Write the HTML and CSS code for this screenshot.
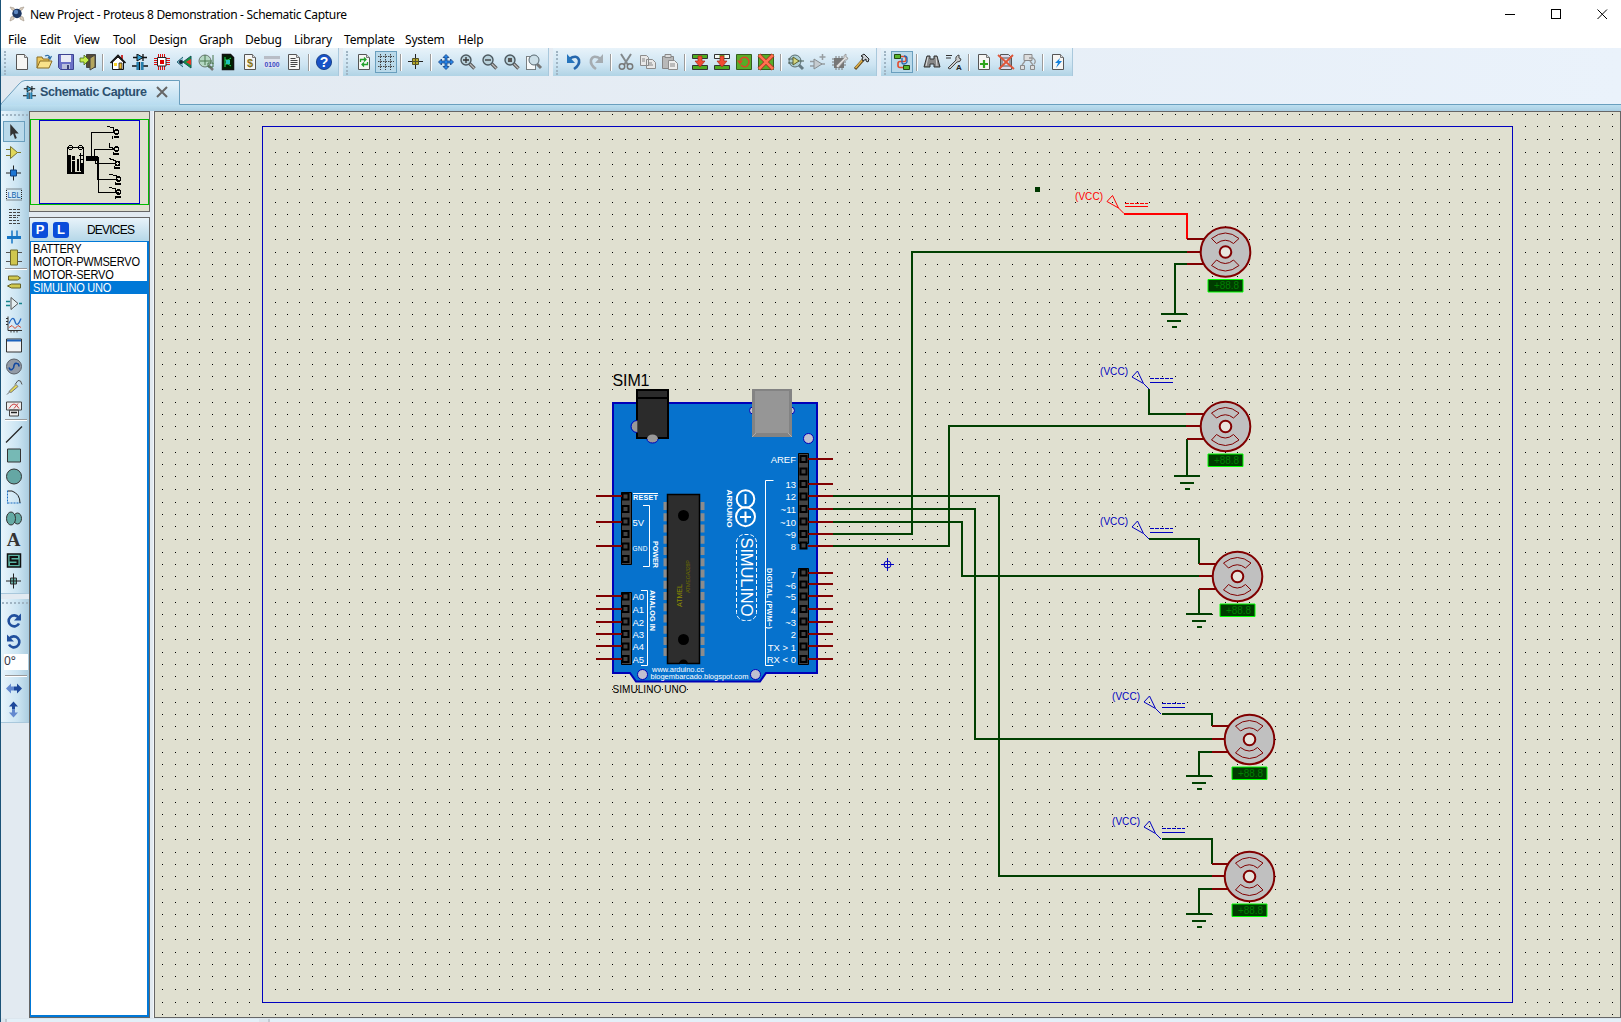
FILE: index.html
```html
<!DOCTYPE html>
<html lang="en">
<head>
<meta charset="utf-8">
<title>New Project - Proteus 8 Demonstration - Schematic Capture</title>
<link rel="stylesheet" href="styles.css">
</head>
<body>
<div class="window">
<header class="titlebar">
  <svg class="app-icon" viewBox="0 0 16 16"><path d="M1 1l4 1 1 3-3-1zM15 1l-4 1-1 3 3-1zM1 15l1-4 3-1 0 3zM15 15l-1-4-3-1 0 3z" fill="#d9cdbd" stroke="#a99d91" stroke-width=".7"/><circle cx="8" cy="7.500" r="4.700" fill="#1d3763"/><circle cx="7" cy="6" r="2.200" fill="#5d86bf"/></svg>
  <span class="title-text">New Project - Proteus 8 Demonstration - Schematic Capture</span>
  <div class="controls">
    <svg viewBox="0 0 11 11"><path d="M0 5.500h10" /></svg>
    <svg viewBox="0 0 11 11"><path d="M.5 .5h9v9h-9z"/></svg>
    <svg viewBox="0 0 11 11"><path d="M.5 .5l9.500 9.500M10 .5L.5 10" class="smooth"/></svg>
  </div>
</header>
<nav class="menu"><span>File</span><span>Edit</span><span>View</span><span>Tool</span><span>Design</span><span>Graph</span><span>Debug</span><span>Library</span><span>Template</span><span>System</span><span>Help</span></nav>

<svg class="defs" width="0" height="0">
  <defs>
    <symbol id="page" viewBox="0 0 16 16"><path d="M2.500 .5h8l3 3v12h-11z" fill="#f6f6f4" stroke="#555"/><path d="M10.500 .5v3h3" fill="#ddd" stroke="#777"/></symbol>
    <symbol id="lens" viewBox="0 0 16 16"><path d="M9 9l5.500 5.500" stroke="#555" stroke-width="3.400"/><path d="M9.500 9.500l5 5" stroke="#bbb" stroke-width="1.300"/><circle cx="6" cy="6" r="5" fill="#b9d2dc" stroke="#4d5960" stroke-width="1.400"/></symbol>
    <symbol id="diode" viewBox="0 0 16 16"><path d="M1 3.500h14M0 12h5M11 12h5M11 0v7M5.500 8v8M10.500 8v8M7.500 8v8" stroke="#111" stroke-width="1.300"/><path d="M5 0v7l6-3.500z" fill="#36a5d8" stroke="#111"/><path d="M4.500 8h2.500v8h-2.500zM9 8h2.500v8h-2.500z" fill="#247fae"/></symbol>
    <symbol id="transfer" viewBox="0 0 16 16"><path d="M.5 .5h15v4h-15zM.5 11.500h15v4h-15z" fill="#4fac21" stroke="#333"/><path d="M6 2h4v5h3l-5 6-5-6h3z" fill="#f14b32" stroke="#a72b18" stroke-width=".7"/></symbol>
  </defs>
</svg>

<section class="toolbars">
  <div class="group g1">
    <i class="grip"></i>
    <svg><use href="#page"/></svg>
    <svg viewBox="0 0 16 16"><path d="M1 14V3h5l1 2h6v3" fill="#eec85c" stroke="#8a6c22"/><path d="M1 14l3-7h12l-3 7z" fill="#fae28a" stroke="#8a6c22"/><path d="M9 2q4-2 5 2m-2-1l2 2 1.500-3" fill="none" stroke="#3170a8" stroke-width="1.200"/></svg>
    <svg viewBox="0 0 16 16"><path d="M.5 .5h15v15h-13l-2-2z" fill="#6a70c6" stroke="#3c4291"/><path d="M3 1h10v7H3z" fill="#e9ebf5"/><path d="M4 10h8v5H4z" fill="#b9bfdb"/><path d="M9 11h2v4H9z" fill="#394174"/></svg>
    <svg viewBox="0 0 16 16"><path d="M6.500 .5h9v13h-9z" fill="#554b34" stroke="#444"/><path d="M10 4l5-3v12l-5 3z" fill="#b3a55e" stroke="#444"/><path d="M0 4h4V1l5 5-5 5V8H0z" fill="#c5ec4c" stroke="#476c17" stroke-width=".8"/></svg>
    <b class="sep"></b>
    <svg viewBox="0 0 16 16"><path d="M11 1h2v4h-2z" fill="#c33"/><path d="M2.500 8v7.500h11V8L8 3z" fill="#fff" stroke="#111"/><path d="M.5 9L8 1.500 15.500 9" fill="none" stroke="#111" stroke-width="1.600"/><path d="M4 9h3v3H4z" fill="#f7d32b"/><path d="M9 9h3v6H9z" fill="#efbc33" stroke="#222" stroke-width=".8"/></svg>
    <svg><use href="#diode"/></svg>
    <svg viewBox="0 0 16 16"><path d="M4.500 0v16M6.500 0v16M8.500 0v16M10.500 0v16M0 4.500h16M0 6.500h16M0 8.500h16M0 10.500h16" stroke="#d11" stroke-width="1"/><path d="M3.500 3.500h8.500v8.500h-8.500z" fill="#fff" stroke="#222"/><path d="M6 6h4v4H6z" fill="#d00"/></svg>
    <svg viewBox="0 0 16 16"><path d="M15 2v12L7 8z" fill="#129442" stroke="#155"/><path d="M15 5v6l-5-3z" fill="#e63522"/><path d="M7 3L1 8l6 5" fill="#93bfd0" stroke="#267"/><circle cx="5" cy="8" r="2" fill="#123"/></svg>
    <svg viewBox="0 0 16 16"><path d="M10 11l5 5" stroke="#777" stroke-width="2.500"/><circle cx="7" cy="7" r="6" fill="#b5d8c4" stroke="#68776e"/><path d="M2 7h12M7 1v10M15 1v9M10 9h5v4h-5z" fill="none" stroke="#47754a"/></svg>
    <svg viewBox="0 0 16 16"><path d="M2.500 .5h8l3 3v12h-11z" fill="#020" stroke="#111" stroke-width="1.500"/><path d="M5 3v10M5 6h3l3-2M5 10h3l3 2" fill="none" stroke="#24d45d"/><path d="M6 6h4v4H6z" fill="#20c4bb"/></svg>
    <svg viewBox="0 0 16 16"><use href="#page"/><text x="8" y="12.500" class="glyph money">$</text></svg>
    <svg viewBox="0 0 16 16"><path d="M0 2h16v12H0z" fill="#dfe4ee"/><path d="M0 2h16v3H0z" fill="#b8bdc6"/><text x="8" y="13" textLength="15" lengthAdjust="spacingAndGlyphs" class="glyph digits">0100</text></svg>
    <svg viewBox="0 0 16 16"><use href="#page"/><path d="M4.500 4.500h5M4.500 6.500h7M4.500 8.500h7M4.500 10.500h7M4.500 12.500h5" stroke="#444"/></svg>
    <b class="sep"></b>
    <svg viewBox="0 0 16 16"><circle cx="8" cy="8" r="7.600" fill="#1852c6" stroke="#0c3278" stroke-width=".8"/><text x="8" y="13" class="glyph help">?</text></svg>
  </div>
  <div class="group g2">
    <i class="grip"></i>
    <svg viewBox="0 0 16 16"><use href="#page"/><path d="M4.500 8V5.500h5M8 3.500l2 2-2 2M11.500 8v2.500h-5M8 8.500l-2 2 2 2" fill="none" stroke="#23a12b" stroke-width="1.300"/></svg>
    <svg class="on" viewBox="0 0 16 16"><path d="M2.500 0v16M7.500 0v16M12.500 0v16M0 2.500h16M0 7.500h16M0 12.500h16" stroke="#444" stroke-dasharray="1.500 1"/></svg>
    <b class="sep"></b>
    <svg viewBox="0 0 16 16"><path d="M7.500 0v15M0 7.500h15" stroke="#222"/><path d="M4.500 4.500h6v6h-6z" fill="#b9ac28" stroke="#555229"/><path d="M7.500 4v7M4 7.500h7" stroke="#555229"/></svg>
    <b class="sep"></b>
    <svg viewBox="0 0 16 16"><path d="M8 .5l3 3H9V7h3.500V5l3 3-3 3V9H9v3.500h2l-3 3-3-3h2V9H3.500v2l-3-3 3-3v2H7V3.500H5z" fill="#2585e9" stroke="#174181" stroke-width=".8"/></svg>
    <svg viewBox="0 0 16 16"><use href="#lens"/><path d="M6 3v6M3 6h6" stroke="#333" stroke-width="1.300"/></svg>
    <svg viewBox="0 0 16 16"><use href="#lens"/><path d="M3 6h6" stroke="#333" stroke-width="1.300"/></svg>
    <svg viewBox="0 0 16 16"><use href="#lens"/><path d="M4 4h4v4H4z" fill="#555"/></svg>
    <svg viewBox="0 0 16 16"><path d="M.5 2.500h9v13h-9z" fill="#f7fafb" stroke="#111" stroke-dasharray="1 1"/><path d="M11 10l4 4" stroke="#777" stroke-width="3"/><circle cx="8" cy="6" r="5" fill="#ccdfe8" stroke="#596870"/></svg>
  </div>
  <div class="group g3">
    <i class="grip"></i>
    <svg viewBox="0 0 16 16"><path d="M3 5q8-5 10 1 1 5-5 9" fill="none" stroke="#2667ad" stroke-width="2.600"/><path d="M1 0v9h8z" fill="#2675bd"/></svg>
    <svg viewBox="0 0 16 16"><path d="M13 5Q5 0 3 6q-1 5 5 9" fill="none" stroke="#a5acb1" stroke-width="2.600"/><path d="M15 0v9H7z" fill="#a5acb1"/></svg>
    <b class="sep"></b>
    <svg viewBox="0 0 16 16"><path d="M3 0l7 11M13 0L6 11" stroke="#83898c" stroke-width="2"/><circle cx="4" cy="12.500" r="2.700" fill="none" stroke="#777" stroke-width="1.500"/><circle cx="12" cy="12.500" r="2.700" fill="none" stroke="#777" stroke-width="1.500"/></svg>
    <svg viewBox="0 0 16 16"><path d="M.5 1.500h6l2 2v8h-8zM6.500 5.500h6l3 3v6h-9z" fill="#e8e8e8" stroke="#8c8c8c"/><path d="M2 5h3M2 7h3M8 9h4M8 11h5" stroke="#888"/></svg>
    <svg viewBox="0 0 16 16"><path d="M.5 2.500h11v12H.5z" fill="#b8b8b8" stroke="#858585"/><path d="M3 .5h6v3H3z" fill="#ddd" stroke="#888"/><path d="M6.500 6.500h6l3 3v6h-9z" fill="#eee" stroke="#8c8c8c"/><path d="M8 10h5M8 12h5" stroke="#888"/></svg>
    <b class="sep"></b>
    <svg><use href="#transfer"/></svg>
    <svg viewBox="0 0 16 16"><use href="#transfer"/><path d="M1 1h4.500v3H1zM10.500 1H15v3h-4.500z" fill="#f4f8f5"/></svg>
    <svg viewBox="0 0 16 16"><path d="M.5 .5h15v15H.5z" fill="#57ac28" stroke="#355e1e"/><path d="M4 6q3-4 7-2 4 4 0 8-3 2-6-1" fill="none" stroke="#df4328" stroke-width="1.500"/><path d="M1 6.500h6l-3 4z" fill="#df4328"/></svg>
    <svg viewBox="0 0 16 16"><path d="M.5 .5h15v15H.5z" fill="#57ac28" stroke="#355e1e"/><path d="M1 1l14 14M15 1L1 15" stroke="#a92d20" stroke-width="4"/><path d="M1 1l14 14M15 1L1 15" stroke="#ff7350" stroke-width="2.600"/></svg>
    <b class="sep"></b>
    <svg viewBox="0 0 16 16"><path d="M10 10l5 5" stroke="#667a83" stroke-width="3"/><circle cx="7" cy="7" r="6" fill="#add0d6" stroke="#5a6c70"/><path d="M0 5h5M0 9h5M10 7h6" stroke="#475b50"/><path d="M5 3v8l6-4z" fill="#d4d780" stroke="#5c602e"/></svg>
    <svg viewBox="0 0 16 16"><path d="M0 7.500h4M0 12h4M11 10h4M12.500 0v6M9.500 3h6" stroke="#979da1" stroke-width="1.500"/><path d="M4 5v10l8-5z" fill="#c5cbcf" stroke="#868d91"/></svg>
    <svg viewBox="0 0 16 16"><path d="M0 5h14M0 8h14M0 11h14M4 2v14M7 2v14M10 2v14" stroke="#777" stroke-width="1"/><path d="M2 4h10v10H2z" fill="#777"/><path d="M4 12l8-8q-1-3 2-4v3l2 1q-1 3-3 2l-7 8z" fill="#ddd" stroke="#888" stroke-width=".7"/></svg>
    <svg viewBox="0 0 16 16"><path d="M1 15l8-9" stroke="#634b22" stroke-width="3"/><path d="M1.500 14l7-8" stroke="#e1b34a" stroke-width="1.500"/><path d="M7 2l3-2 5 5-1 3-2-1V5l-3 2-1-2 1-2z" fill="#ccd1d6" stroke="#222"/></svg>
  </div>
  <div class="group g4">
    <i class="grip"></i>
    <svg class="on" viewBox="0 0 16 16"><path d="M6 2.500h4q2 0 2 2v2q0 1-2 1H6q-2 0-2 2v2q0 2 2 2h4" fill="none" stroke="#e34b2d" stroke-width="1.600"/><path d="M8 4v5q0 1 2 1t3-2V4q0-2-3-2" fill="none" stroke="#2462ae" stroke-width="1.300"/><path d="M.5 .5h6v4h-6zM9.500 11.500h6v4h-6z" fill="#58b52c" stroke="#234913"/></svg>
    <b class="sep"></b>
    <svg viewBox="0 0 16 16"><path d="M3 2h3v3h4V2h3l3 11h-6v-3H6v3H0z" fill="#888" stroke="#333"/><path d="M4 3L2 12M12 3l1 9" stroke="#ddd"/></svg>
    <svg viewBox="0 0 16 16"><path d="M0 1.500h6M0 4h5" stroke="#333"/><path d="M2 14l8-8q-1-4 3-5v3l2 1q0 3-4 3l-7 7z" fill="#ccc" stroke="#444"/><text x="13" y="16" class="glyph annot">A</text></svg>
    <b class="sep"></b>
    <svg viewBox="0 0 16 16"><use href="#page"/><path d="M8 6v8M4 10h8" stroke="#2da51d" stroke-width="2.200"/></svg>
    <svg viewBox="0 0 16 16"><path d="M2.500 .5h8l3 3v12h-11zM4 4h8v8H4zM4 4l8 8M12 4l-8 8" fill="#dde" stroke="#555" stroke-width="1"/><path d="M0 1l16 14M15 1L1 15" stroke="#df5538" stroke-width="1.800"/></svg>
    <svg viewBox="0 0 16 16"><path d="M4 .5h8v6H4zM.5 11.500h4v4h-4zM10.500 11.500h4v4h-4z" fill="#ddd" stroke="#888"/><path d="M5 7l-3 4M10 7l3 4M9 4h4q4 3 1 6" fill="none" stroke="#999" stroke-width="1.300"/></svg>
    <b class="sep"></b>
    <svg viewBox="0 0 16 16"><use href="#page"/><path d="M10 4L5 9h3l-2 5 6-7H9z" fill="#1482dc"/></svg>
  </div>
</section>

<section class="tabs">
  <svg class="tab-shape" viewBox="0 0 180 25"><path d="M0 25L18 4Q21 .5 24 .5H178.500V25z" fill="url(#tabfill)" stroke="none"/><path d="M0 24L18 4Q21 .5 24 .5H178.500V24.500" fill="none" stroke="#6a9fbe"/><defs><linearGradient id="tabfill" x2="0" y2="1"><stop stop-color="#e6f2fa"/><stop offset="1" stop-color="#b8dcf0"/></linearGradient></defs></svg>
  <div class="tab"><svg class="tab-icon"><use href="#diode"/></svg><span>Schematic Capture</span><svg class="close" viewBox="0 0 12 12"><path d="M1 1l10 10M11 1L1 11" stroke="#666" stroke-width="2"/></svg></div>
</section>
<div class="strip"></div>

<main class="workspace">
  <aside class="rail">
    <div class="rail-group">
      <i class="hgrip"></i>
      <svg class="on" viewBox="0 0 16 16"><path d="M4 0v13l3-3 2 6 2-1-2-5h4z" fill="#333"/></svg>
      <svg viewBox="0 0 16 16"><path d="M0 5h5M0 11h5M10 8h5" stroke="#7d7a2c"/><path d="M4.500 2v12l7-6z" fill="#e1d859" stroke="#777334"/></svg>
      <svg viewBox="0 0 16 16"><path d="M7.500 0v15M0 7.500h15" stroke="#222"/><path d="M4.500 4.500h6v6h-6z" fill="#1c76d4" stroke="#123f78"/></svg>
      <svg viewBox="0 0 16 16"><path d="M.5 2.500h15v11H.5z" fill="none" stroke="#222" stroke-dasharray="1 1"/><text x="8" y="11.500" textLength="13" lengthAdjust="spacingAndGlyphs" class="glyph lbl">LBL</text></svg>
      <svg viewBox="0 0 16 16"><path d="M3 1.500h11M3 4.500h11M3 7.500h11M3 9.500h9M3 12.500h10M3 15.500h11" stroke="#444" stroke-dasharray="3 1" shape-rendering="crispEdges"/></svg>
      <svg viewBox="0 0 16 16"><path d="M1 9h14" stroke="#1675c5" stroke-width="3"/><path d="M6 2v6M11 2v6M6 10v5" stroke="#1675c5" stroke-width="1.500"/></svg>
      <svg viewBox="0 0 16 16"><path d="M0 3h4M0 12h4M12 3h4M12 12h4" stroke="#555"/><path d="M4.500 .5h7v15h-7z" fill="#cfc64d" stroke="#6c682c"/></svg>
      <b class="hsep"></b>
      <svg viewBox="0 0 16 16"><path d="M2.500 1.500h9l3 2-3 2h-9zM14.500 9.500h-9l-4 2 4 2h9z" fill="#d1c94f" stroke="#666228"/></svg>
      <svg viewBox="0 0 16 16"><path d="M0 6h4M0 10h4M13 8h3" stroke="#16828a" stroke-width="1.300"/><path d="M5 2v12l7-6z" fill="#e5eff2" stroke="#555"/></svg>
      <svg viewBox="0 0 16 16"><path d="M2 0v14h14M0 2h2M0 5h2M0 8h2M5 14v2M8 14v2M11 14v2" fill="none" stroke="#333"/><path d="M3 7q4-9 6-2t6-3" fill="none" stroke="#2468c1" stroke-width="1.300"/><path d="M3 11l3-2 3 3 3-3 3 2" fill="none" stroke="#d4492d"/></svg>
      <svg viewBox="0 0 16 16"><path d="M.5 1.500h15v13H.5z" fill="#f3f4f5" stroke="#333"/><path d="M1 2h14v2H1z" fill="#1c62bd"/></svg>
      <svg viewBox="0 0 16 16"><circle cx="8" cy="8" r="7.500" fill="#929aa6" stroke="#5a6067"/><path d="M3 9q1 3 3 2 2-1 2-4 1-3 3-2 2 0 2 3" fill="none" stroke="#1248a0" stroke-width="1.600"/></svg>
      <svg viewBox="0 0 16 16"><path d="M9 5l3-4q3-1 4 4" fill="none" stroke="#555"/><path d="M1 15l3-3" stroke="#666"/><path d="M3 12l7-7 2 2-7 6z" fill="#e4d856" stroke="#777"/></svg>
      <svg viewBox="0 0 16 16"><path d="M.5 1.500h15v8H.5zM3.500 9.500h9v6h-9z" fill="#eee" stroke="#444"/><path d="M3 8q5-9 10 0M8 8l4-5" fill="none" stroke="#c44"/><path d="M5 12h6" stroke="#222" stroke-width="1.500"/></svg>
      <b class="hsep tall"></b>
      <svg viewBox="0 0 16 16"><path d="M0 16L16 0" stroke="#222" stroke-width="1.300"/></svg>
      <svg viewBox="0 0 16 16"><path d="M1.500 1.500h13v13h-13z" fill="#76b9b5" stroke="#333"/></svg>
      <svg viewBox="0 0 16 16"><circle cx="8" cy="8" r="7.500" fill="#65a7a4" stroke="#333"/></svg>
      <svg viewBox="0 0 16 16"><path d="M1.500 1v13M1.500 13.500h13" stroke="#176bc0" stroke-dasharray="2 1"/><path d="M2 1.500h4q8 3 8 12" fill="none" stroke="#222"/></svg>
      <svg viewBox="0 0 16 16"><ellipse cx="11.500" cy="8" rx="4" ry="5.500" fill="#64aaa4" stroke="#333"/><ellipse cx="5" cy="8" rx="4.500" ry="6.500" fill="#64aaa4" stroke="#333"/></svg>
      <svg viewBox="0 0 16 16"><text x="7.500" y="14" class="glyph letter-a">A</text></svg>
      <svg viewBox="0 0 16 16"><path d="M1.500 1.500h13v13h-13z" fill="#5cb5a5" stroke="#111" stroke-width="1.500"/><path d="M12 4.500H4.500v3.500h7v3.500H4" fill="none" stroke="#111" stroke-width="2"/></svg>
      <svg viewBox="0 0 16 16"><path d="M4.500 4.500h6v6h-6z" fill="#65aaa3" stroke="#333"/><path d="M7.500 0v15M0 7.500h15" stroke="#222"/></svg>
    </div>
    <div class="rail-group second">
      <i class="hgrip"></i>
      <svg viewBox="0 0 16 16"><path d="M12.500 5A5.500 5.500 0 1 0 13 11" fill="none" stroke="#204f9d" stroke-width="2.600"/><path d="M15 1v7H8z" fill="#204f9d"/></svg>
      <svg viewBox="0 0 16 16"><path d="M3.500 5A5.500 5.500 0 1 1 3 11" fill="none" stroke="#204f9d" stroke-width="2.600"/><path d="M1 1v7h7z" fill="#204f9d"/></svg>
      <span class="angle">0°</span>
      <b class="hsep"></b>
      <svg viewBox="0 0 16 16"><path d="M0 8l5-5v3h3v4H5v3z" fill="#6389cf"/><path d="M16 8l-5-5v3H8v4h3v3z" fill="#1d489a"/></svg>
      <svg viewBox="0 0 16 16"><path d="M7.500 0L3 5h3v3h3V5h3z" fill="#1d489a"/><path d="M7.500 16L3 11h3V8h3v3h3z" fill="#6389cf"/></svg>
    </div>
  </aside>

  <section class="side">
    <div class="overview">
      <svg viewBox="30 112 119 98" shape-rendering="crispEdges"><path d="M30.500 118.500h118v85h-118z" fill="none" stroke="#0b0"/><path d="M39.500 119.500h100v83h-100z" fill="none" stroke="#00c"/><path d="M67.500 146.500h16v26h-16z" fill="none" stroke="#000"/><path d="M68 154h3v18h-3zM72 155h3v4h-3zM72 160h3v11h-3zM77 158h2v12h-2zM80 152h1v18h-1zM79 154h4v1h-4zM81 158h2v1h-2zM81 162h2v9h-2zM86 155h12v5H86z"/><circle cx="70.500" cy="147" r="2" fill="none" stroke="#000"/><circle cx="80.500" cy="147" r="2" fill="none" stroke="#000"/><path d="M69 172h14" stroke="#000"/><path d="M91.500 156v-24.500h22M94.500 157v-8.500h20M95.500 158v4.500h20M97.500 156v22.500h20M98.500 156v35.500h20M107 126l6 1v4M109 143l1 4 5 1M109 158l6 2v2M109 174l7 1v3M109 187l6 1v3M112 135v3M113 151v3M114 165v3M115 181v3M115 195v3" fill="none" stroke="#000"/><g fill="none" stroke="#000" stroke-width="1.500"><circle cx="116.500" cy="131.500" r="2"/><circle cx="116.500" cy="148.500" r="2"/><circle cx="117.500" cy="163" r="2"/><circle cx="118.500" cy="178.500" r="2"/><circle cx="118.500" cy="191.500" r="2"/></g><path d="M114 135h5v2h-5zM114 152h5v2h-5zM115 166h5v2h-5zM116 182h5v2h-5zM116 195h5v2h-5z"/></svg>
    </div>
    <div class="devices">
      <div class="devices-head"><b>P</b><b>L</b><span>DEVICES</span></div>
      <ul><li><span>BATTERY</span></li><li><span>MOTOR-PWMSERVO</span></li><li><span>MOTOR-SERVO</span></li><li class="selected"><span>SIMULINO UNO</span></li></ul>
    </div>
  </section>

  <div class="canvas">
  <svg viewBox="155 112 1465 905" width="1465" height="905">
    <defs>
      <pattern id="dots" width="50" height="50" patternUnits="userSpaceOnUse"><path d="M12 2h1v1h-1zM25 2h1v1h-1zM37 2h1v1h-1zM49 2h1v1h-1zM12 14h1v1h-1zM25 14h1v1h-1zM37 14h1v1h-1zM49 14h1v1h-1zM12 26h1v1h-1zM25 26h1v1h-1zM37 26h1v1h-1zM49 26h1v1h-1zM12 39h1v1h-1zM25 39h1v1h-1zM37 39h1v1h-1zM49 39h1v1h-1z" shape-rendering="crispEdges"/></pattern>
      <g id="motor">
        <circle r="24.800" fill="#c0c0c0" stroke="#800000" stroke-width="2"/>
        <circle r="5.800" fill="#e8e5dd" stroke="#800000" stroke-width="2"/>
        <path d="M-14-13.500Q0-24.500 13.500-13.500L8-8.500Q0-15-9-8.500ZM-14 13.500Q0 24.500 13.500 13.500L8 8Q0 15-9 8Z" fill="none" stroke="#800000"/>
        <path d="M-17.500 27.500h35v12.500h-35z" fill="#003c00" stroke="#0f0"/>
        <text x="1" y="37" text-anchor="middle" textLength="25" class="lcd">+88.8</text>
      </g>
      <g id="ground" shape-rendering="crispEdges"><path d="M-13 0h26M-7 6.500h14M-2 12.500h5" stroke="#004000" stroke-width="2"/></g>
      <g id="vcc"><path d="M0 0L-5.500-5.500L-17-12L-11.500-18L-5.500-5.500" fill="none" stroke="currentColor"/><path d="M1-10.500h23" stroke="currentColor" stroke-dasharray="4 1" shape-rendering="crispEdges"/><path d="M1-7h23" stroke="currentColor" shape-rendering="crispEdges"/><text x="-49" y="-14" textLength="28" fill="currentColor" class="vcc-text">(VCC)</text></g>
      <g id="socket"><path d="M-3-3h6v6h-6z" fill="#444" stroke="#000" stroke-width="2"/></g>
    </defs>
    <path d="M155 112h1465v905H155z" fill="#e0e0d0"/>
    <path d="M155 112h1465v905H155z" fill="url(#dots)"/>
    <path d="M262.500 126.500h1250v876h-1250z" fill="none" stroke="#0000c0"/>
    <path d="M1035 187h5v5h-5z" fill="#003800"/>

    <g class="wires" shape-rendering="crispEdges">
      <path d="M833 534H912V252H1187M833 546H949V426H1187M833 522H962V576H1199M833 509H975V739H1212M833 496H999V876H1212"/>
      <path d="M1149 389v25h37M1149 539h50v25M1162 714h50v12M1162 839h50v25"/>
      <path d="M1187 264h-12v50M1187 439v37M1199 589v25M1212 752h-13v24M1212 889h-13v25"/>
      <path class="hot" d="M1124 214h63v25"/>
      <path class="pin" d="M1187 239h17M1187 252h13M1187 264h17M1186 414h18M1186 426h14M1187 439h17M1199 564h17M1199 576h13M1199 589h17M1212 726h16M1212 739h13M1212 752h16M1212 864h16M1212 876h13M1212 889h16"/>
    </g>
    <use href="#ground" x="1174" y="314"/><use href="#ground" x="1187" y="476"/><use href="#ground" x="1199" y="614"/><use href="#ground" x="1199" y="776"/><use href="#ground" x="1199" y="914"/>
    <use href="#motor" x="1225.500" y="252"/><use href="#motor" x="1225.500" y="426.500"/><use href="#motor" x="1237.500" y="576.500"/><use href="#motor" x="1249.500" y="739.500"/><use href="#motor" x="1249.500" y="876.500"/>
    <g color="#f00"><use href="#vcc" x="1124" y="213.500"/></g>
    <g color="#0000c0"><use href="#vcc" x="1149" y="389"/><use href="#vcc" x="1149" y="539"/><use href="#vcc" x="1161" y="714"/><use href="#vcc" x="1161" y="839"/></g>
    <g fill="none" stroke="#0000c0"><circle cx="887.500" cy="564.500" r="3.500"/><path d="M881 564.500h13M887.500 558v13"/></g>

    <text x="612.500" y="386" textLength="37" class="ref">SIM1</text>
    <text x="612.500" y="692.500" textLength="74" class="part">SIMULINO UNO</text>
    <path d="M613 403H817V673H766L760 681.500H636L630 673H613Z" fill="#0672cd" stroke="#0000b8" stroke-width="2"/>
    <g fill="#c0c0d0" stroke="#0000b8"><circle cx="808.500" cy="438.500" r="5"/><circle cx="642.500" cy="674.500" r="5"/><circle cx="755.500" cy="674.500" r="5"/><circle cx="753" cy="410.500" r="3.500"/><circle cx="791" cy="410.500" r="3.500"/></g>
    <path d="M637 390h31v48h-31z" fill="#2b2b2b" stroke="#000" stroke-width="2"/><path d="M637 398h31" stroke="#000" stroke-width="2"/>
    <path d="M637.500 420.500a6 6 0 0 0 0 12z" fill="#999" /><path d="M637 420.500a6 6 0 0 0 0 12" fill="none" stroke="#0000b8"/>
    <path d="M647 439a5.500 4.500 0 0 1 11 0 5.500 4 0 0 1-11 0" fill="#999"/><path d="M647 439a5.500 4 0 0 0 11 0" fill="none" stroke="#0000b8"/>
    <path d="M752 389h40v48h-40z" fill="#838383"/><path d="M755 391h34v42h-34z" fill="#969696"/><path d="M752 437l4-4M792 437l-4-4" stroke="#aaa"/>
    <g fill="#444" stroke="#000"><path d="M798.500 453.500h10v90h-10zM798.500 568.500h10v96h-10zM621.500 492.500h10v72h-10zM621.500 592.500h10v72h-10z"/></g>
    <g>
      <use href="#socket" x="803.500" y="459"/><use href="#socket" x="803.500" y="471.500"/><use href="#socket" x="803.500" y="484"/><use href="#socket" x="803.500" y="496.500"/><use href="#socket" x="803.500" y="509"/><use href="#socket" x="803.500" y="521.500"/><use href="#socket" x="803.500" y="534"/><use href="#socket" x="803.500" y="545.500"/>
      <use href="#socket" x="803.500" y="572.500"/><use href="#socket" x="803.500" y="584.500"/><use href="#socket" x="803.500" y="596.500"/><use href="#socket" x="803.500" y="609"/><use href="#socket" x="803.500" y="621.500"/><use href="#socket" x="803.500" y="634"/><use href="#socket" x="803.500" y="646.500"/><use href="#socket" x="803.500" y="659"/>
      <use href="#socket" x="625.500" y="496.500"/><use href="#socket" x="625.500" y="509"/><use href="#socket" x="625.500" y="521.500"/><use href="#socket" x="625.500" y="534"/><use href="#socket" x="625.500" y="546.500"/><use href="#socket" x="625.500" y="559"/>
      <use href="#socket" x="625.500" y="596.500"/><use href="#socket" x="625.500" y="609"/><use href="#socket" x="625.500" y="621.500"/><use href="#socket" x="625.500" y="634"/><use href="#socket" x="625.500" y="646.500"/><use href="#socket" x="625.500" y="659"/>
    </g>
    <path class="leads" shape-rendering="crispEdges" d="M808 459h25M808 484h25M808 496h25M808 509h25M808 522h25M808 534h25M808 546h25M808 573h25M808 584h25M808 596h25M808 609h25M808 622h25M808 634h25M808 646h25M808 659h25M596 496h26M596 522h26M596 546h26M596 596h26M596 609h26M596 622h26M596 634h26M596 646h26M596 659h26"/>
    <path d="M773.500 480.500h-8v185h8M643 505.500h6.500v61h-6.500M641 590.500h6.500v75h-6.500M633 493.500h25" fill="none" stroke="#fff"/>
    <g class="labels end"><text x="796" y="463">AREF</text><text x="796" y="488">13</text><text x="796" y="500">12</text><text x="796" y="512.500">~11</text><text x="796" y="525.500">~10</text><text x="796" y="538">~9</text><text x="796" y="549.500">8</text><text x="796" y="577.500">7</text><text x="796" y="588.500">~6</text><text x="796" y="600">~5</text><text x="796" y="613.500">4</text><text x="796" y="626">~3</text><text x="796" y="638">2</text><text x="796" y="650.500">TX &gt; 1</text><text x="796" y="663">RX &lt; 0</text></g>
    <g class="labels"><text x="632.500" y="525.500">5V</text><text x="632.500" y="600">A0</text><text x="632.500" y="613">A1</text><text x="632.500" y="625.500">A2</text><text x="632.500" y="638">A3</text><text x="632.500" y="650">A4</text><text x="632.500" y="663">A5</text></g>
    <g class="tiny"><text x="633" y="499.500" textLength="25">RESET</text><text x="632.500" y="551" textLength="15" class="gnd">GND</text>
      <text transform="translate(652.500 541) rotate(90)" textLength="27">POWER</text><text transform="translate(649.500 590) rotate(90)" textLength="41">ANALOG IN</text><text transform="translate(766.500 568) rotate(90)" textLength="61">DIGITAL (PWM~)</text><text transform="translate(726.500 489.500) rotate(90)" textLength="38" lengthAdjust="spacingAndGlyphs" class="brand">ARDUINO</text></g>
    <g fill="none" stroke="#fff" stroke-width="2"><circle cx="745.500" cy="499" r="8.800"/><circle cx="745.500" cy="516.700" r="9.500"/><path d="M745.500 494v10M745.500 511.500v11M740 517h11"/></g>
    <rect x="736.500" y="534.500" width="20" height="86" rx="8" fill="none" stroke="#fff" stroke-dasharray="4 2"/>
    <text transform="translate(741 537.500) rotate(90)" textLength="79" class="sim">SIMULINO</text>
    <path d="M665.500 502v155M702.500 502v155" stroke="#8c8c8c" stroke-width="4" stroke-dasharray="8 3.240"/>
    <path d="M667.500 494.500h32v169h-13a4 4 0 0 0-7 0h-12z" fill="#2d2d2d" stroke="#000" stroke-width="1.500"/><path d="M679 664a4.500 4.500 0 0 1 9 0"/>
    <circle cx="683.500" cy="515.500" r="5.500"/><circle cx="683.500" cy="639.500" r="5.500"/>
    <text transform="translate(681.500 607) rotate(-90)" textLength="23" class="atmel">ATMEL</text><text transform="translate(690 593) rotate(-90)" textLength="33" class="mega">ATMEGA328P</text>
    <g class="url"><text x="652" y="671.500" textLength="52">www.arduino.cc</text><text x="650.500" y="679" textLength="98">blogembarcado.blogspot.com</text></g>
  </svg>
  </div>
</main>
<footer class="status"><i></i><i></i></footer>
</div>
</body>
</html>
```
FILE: styles.css
```css
* { box-sizing: border-box; }
body { margin: 0; overflow: hidden; font-family: "Noto Sans", "Open Sans", sans-serif; font-size: 12px; color: #000; }
.window { width: 1621px; height: 1022px; display: flex; flex-direction: column; border-left: 1px solid #1b5378; background: #e2eaf1; }
.defs { display: block; width: 0; height: 0; flex: none; }

.titlebar { height: 30px; flex: none; background: #fff; display: flex; align-items: center; padding-left: 8px; padding-bottom: 2px; }
.app-icon { width: 16px; height: 16px; }
.title-text { font-size: 12px; margin-left: 5px; letter-spacing: -.32px; white-space: nowrap; }
.controls { margin-left: auto; display: flex; gap: 35px; padding-right: 13px; }
.controls svg { width: 11px; height: 11px; fill: none; stroke: #000; shape-rendering: crispEdges; }
.controls .smooth { shape-rendering: auto; }
.menu { height: 18px; flex: none; background: #fff; display: grid; grid-template-columns: 32px 34px 39px 36px 50px 46px 49px 50px 61px 53px 40px; padding-left: 7px; line-height: 19px; letter-spacing: -.2px; }

.toolbars { height: 28px; flex: none; display: flex; gap: 4px; background: linear-gradient(90deg, #e2e9f0, #eaf2fb); }
.group { height: 28px; display: flex; align-items: center; background: linear-gradient(#e8f3fa, #cde4f2 60%, #b0d3e5); border-right: 1px solid #a9c8dc; }
.g1 { width: 338px; }
.g2 { width: 206px; }
.g3 { width: 324px; }
.g4 { width: 192px; }
.grip { width: 3px; height: 24px; margin: 2px 4px 0 3px; border-left: 2px dotted #9fb4c3; }
.group > svg { width: 22px; height: 22px; padding: 3px; flex: none; overflow: visible; }
.group svg.on, .rail svg.on { background: #b9d9ea; border: 1px solid #6a9fbe; padding: 2px; }
.sep { width: 8px; height: 17px; flex: none; background: linear-gradient(90deg, transparent 3px, #9b9b9b 3px, #9b9b9b 4px, #fff 4px, #fff 5px, transparent 5px); }
.glyph { font-family: "Liberation Sans", Arial, sans-serif; text-anchor: middle; font-weight: bold; }
.money { font-size: 11px; fill: #877418; }
.digits { font-size: 8px; fill: #3a4ac6; }
.help { font-size: 14px; fill: #fff; }
.annot { font-size: 8px; fill: #222; }
.lbl { font-size: 9px; font-weight: normal; fill: #0c5eab; }
.letter-a { font-family: "Liberation Serif", serif; font-size: 19px; fill: #333; }

.tabs { height: 29px; flex: none; display: grid; align-items: end; background: linear-gradient(90deg, #e2e9f0, #eaf2fb); border-bottom: 1px solid #6a9fbe; }
.tab-shape { grid-area: 1 / 1; width: 180px; height: 25px; margin-bottom: -1px; }
.tab { grid-area: 1 / 1; height: 24px; display: flex; align-items: center; padding-left: 22px; font: bold 12.5px "Liberation Sans", Arial, sans-serif; color: #2c506f; }
.tab span { width: 107px; margin-left: 4px; white-space: nowrap; letter-spacing: -.4px; }
.tab-icon { width: 13px; height: 15px; }
.close { width: 12px; height: 12px; margin-left: 9px; }
.strip { height: 6px; flex: none; background: linear-gradient(#bcdff0, #a9cee3); }

.workspace { height: 907px; flex: none; display: flex; }
.rail { width: 28px; display: flex; flex-direction: column; gap: 5px; }
.rail-group { width: 28px; display: flex; flex-direction: column; align-items: flex-start; padding-left: 2px; background: linear-gradient(90deg, #e8f5fc, #cbe4f2 60%, #abcde0); border-bottom: 1px solid #a9c8dc; height: 483px; }
.rail-group.second { height: 124px; }
.hgrip { height: 3px; width: 26px; flex: none; margin: 3px 0 4px -1px; border-top: 2px dotted #9fb4c3; }
.second .hgrip { margin-bottom: 5px; }
.rail svg { width: 22px; height: 21px; padding: 2.500px 3px; flex: none; overflow: visible; }
.hsep { width: 22px; margin-left: 2px; height: 4px; flex: none; background: linear-gradient(#999 1px, #fff 1px, #fff 2px, transparent 2px); }
.second .hsep { height: 3px; }
.hsep.tall { height: 5px; }
.angle { width: 24px; height: 16px; flex: none; line-height: 14px; margin: 2px 0 5px 1px; background: #fff; color: #38384a; font-size: 12px; }

.side { width: 121px; display: flex; flex-direction: column; gap: 5px; }
.overview { height: 101px; border: 1px solid #666; background: #e0e0d0; }
.overview svg { display: block; width: 119px; height: 99px; }
.devices { flex: 1; border: 1px solid #666; display: flex; flex-direction: column; font-family: "Liberation Sans", Arial, sans-serif; }
.devices-head { height: 23px; display: flex; align-items: center; gap: 5px; padding-left: 2px; background: linear-gradient(#e8f3fa, #b5d7e8); }
.devices-head b { width: 16px; height: 16px; border-radius: 3px; background: #0b4dda; color: #fff; font-size: 13px; line-height: 16px; text-align: center; }
.devices-head span { margin-left: 13px; font-size: 12px; letter-spacing: -.8px; }
.devices ul { flex: 1; margin: 0; padding: 0; list-style: none; background: #fff; border: 2px solid #0078d7; border-width: 1px 2px 2px 1px; }
.devices li { height: 13px; line-height: 14px; padding-left: 2px; font-size: 12px; white-space: nowrap; letter-spacing: -.25px; }
.devices li span { display: inline-block; transform: scaleX(.92); transform-origin: left; }
.devices .selected { background: #0078d7; color: #fff; }

.canvas { width: 1467px; margin-left: 4px; border: 1px solid #666; background: #e0e0d0; box-shadow: -1px 0 #f2f6f9; }
.canvas svg { display: block; font-family: "Liberation Sans", Arial, sans-serif; }
.wires { fill: none; stroke: #004000; stroke-width: 2; }
.wires .hot { stroke: #f00; }
.wires .pin, .leads { stroke: #800000; stroke-width: 2; }
.lcd { font-size: 10px; fill: #008000; }
.vcc-text { font-size: 10px; }
.ref { font-size: 16px; }
.part { font-size: 10px; }
.labels { fill: #fff; font-size: 9.500px; }
.end { text-anchor: end; }
.tiny { fill: #fff; font-size: 7.200px; font-weight: bold; }
.gnd { font-size: 6.500px; font-weight: normal; }
.brand { font-size: 8px; }
.sim { fill: #fff; font-size: 16.500px; }
.atmel { fill: #8c8c00; font-size: 7px; }
.mega { fill: #6b6b00; font-size: 5.500px; }
.url { fill: #fff; font-size: 7.500px; }

.status { height: 4px; flex: none; overflow: hidden; display: flex; gap: 9px; background: #dce6ee; padding-left: 4px; }
.status i { width: 254px; height: 3px; margin-top: 1px; background: #e3f0f8; border-left: 2px solid #c0cbd3; }
.status i + i { flex: 1; }
```
